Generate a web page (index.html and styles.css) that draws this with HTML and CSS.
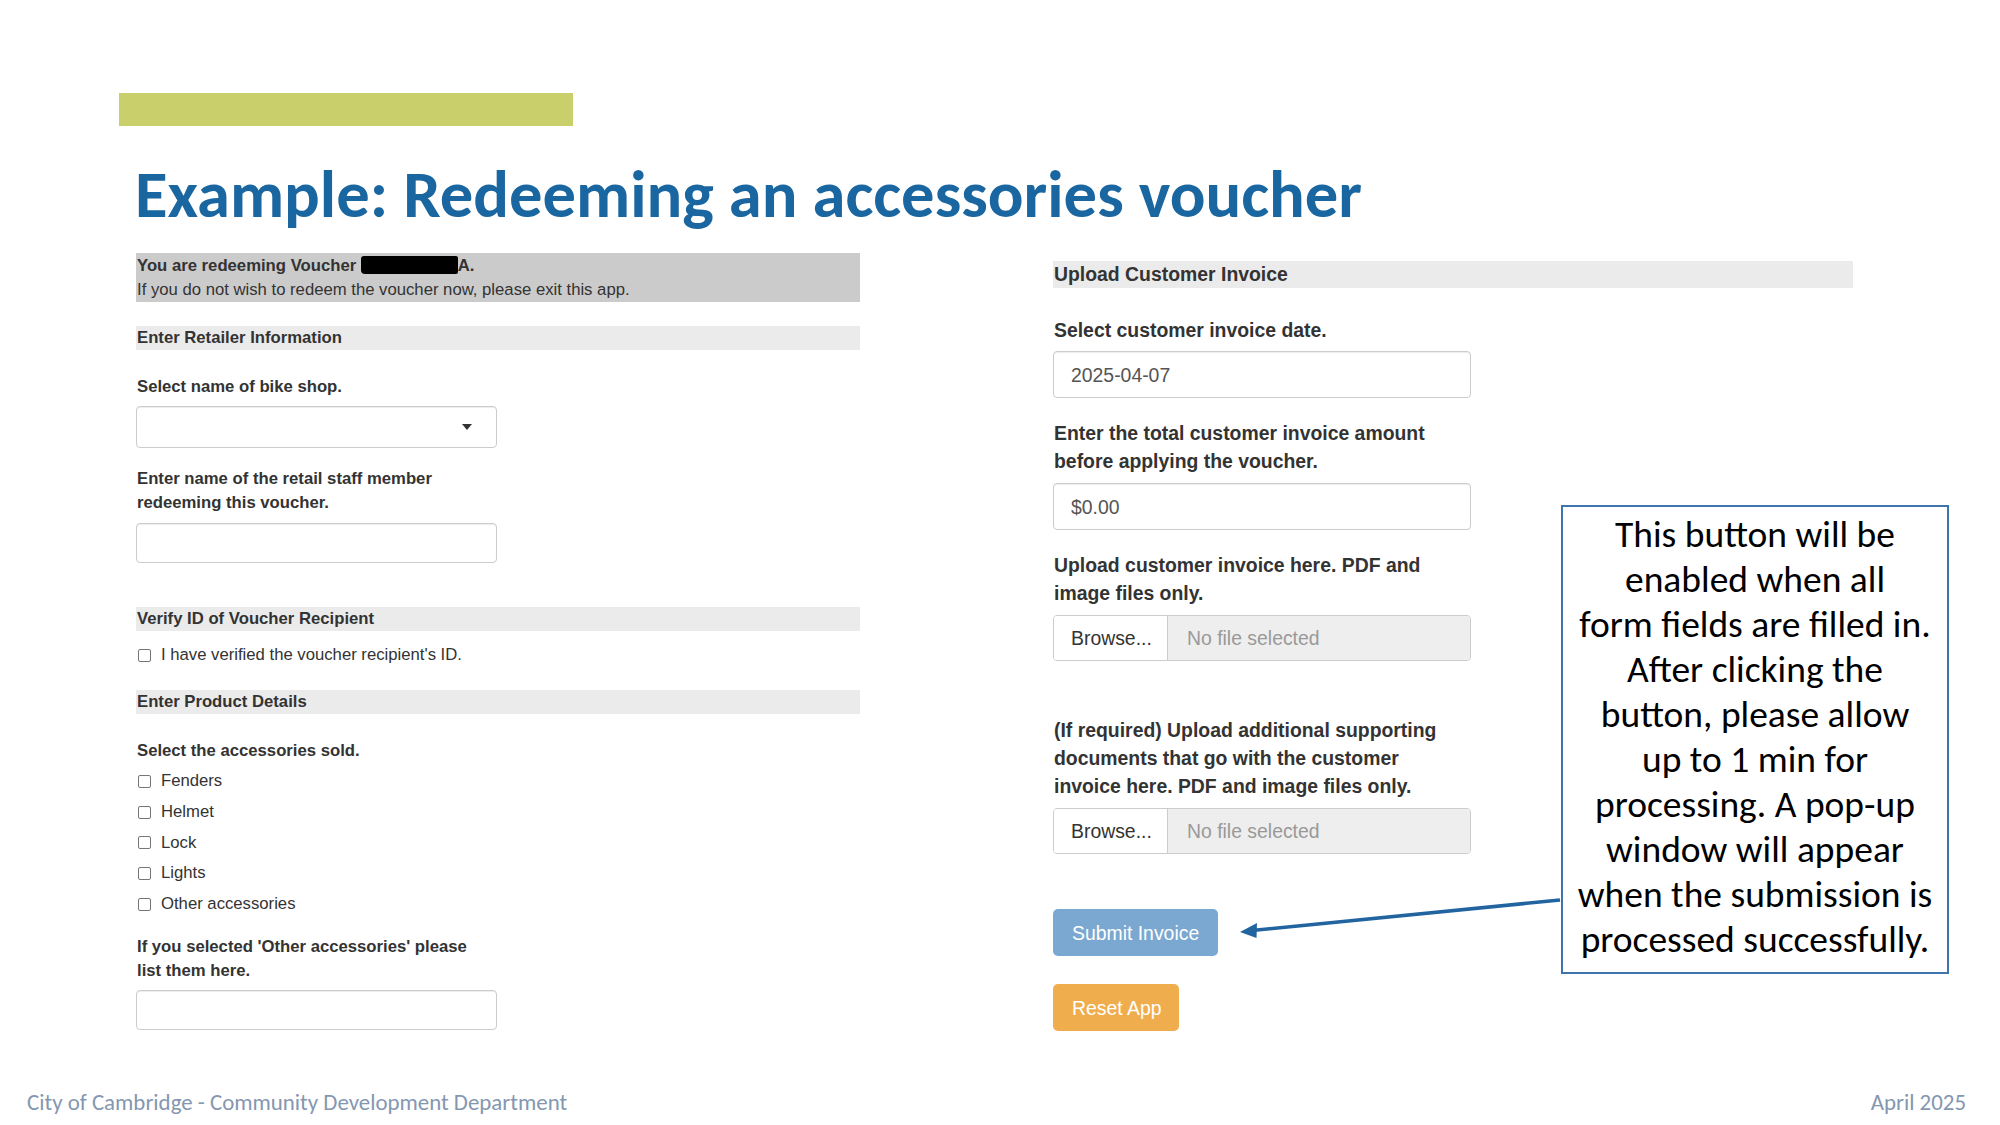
FILE: index.html
```html
<!DOCTYPE html>
<html lang="en">
<head>
<meta charset="utf-8">
<title>Example: Redeeming an accessories voucher</title>
<link rel="stylesheet" href="styles.css">
</head>
<body>
<div class="slide">
  <div class="accent"></div>
  <h1 class="title">Example: Redeeming an accessories voucher</h1>

  <div class="content">
    <div class="col-left">
      <div class="notice">
        <div class="notice-strong">You are redeeming Voucher <span class="redact"></span>A.</div>
        <div>If you do not wish to redeem the voucher now, please exit this app.</div>
      </div>

      <div class="section section-first">Enter Retailer Information</div>
      <div class="label label-after-section">Select name of bike shop.</div>
      <div class="select"><span class="caret"></span></div>
      <div class="label label-after-field">Enter name of the retail staff member<br>redeeming this voucher.</div>
      <div class="input"></div>

      <div class="section section-verify">Verify ID of Voucher Recipient</div>
      <div class="check-row check-single"><span class="box"></span>I have verified the voucher recipient's ID.</div>

      <div class="section section-product">Enter Product Details</div>
      <div class="label label-list">Select the accessories sold.</div>
      <div class="check-list">
        <div class="check-row"><span class="box"></span>Fenders</div>
        <div class="check-row"><span class="box"></span>Helmet</div>
        <div class="check-row"><span class="box"></span>Lock</div>
        <div class="check-row"><span class="box"></span>Lights</div>
        <div class="check-row"><span class="box"></span>Other accessories</div>
      </div>
      <div class="label label-other">If you selected 'Other accessories' please<br>list them here.</div>
      <div class="input"></div>
    </div>

    <div class="col-right">
      <div class="r-section">Upload Customer Invoice</div>
      <div class="r-label r-label-first">Select customer invoice date.</div>
      <div class="r-input">2025-04-07</div>
      <div class="r-label r-label-next">Enter the total customer invoice amount<br>before applying the voucher.</div>
      <div class="r-input">$0.00</div>
      <div class="r-label r-label-next">Upload customer invoice here. PDF and<br>image files only.</div>
      <div class="file"><span class="browse">Browse...</span><span class="file-name">No file selected</span></div>
      <div class="r-label r-label-far">(If required) Upload additional supporting<br>documents that go with the customer<br>invoice here. PDF and image files only.</div>
      <div class="file"><span class="browse">Browse...</span><span class="file-name">No file selected</span></div>
      <div class="btn btn-submit">Submit Invoice</div>
      <div class="btn btn-reset">Reset App</div>
    </div>
  </div>

  <div class="footer">
    <span>City of Cambridge - Community Development Department</span>
    <span>April 2025</span>
  </div>

  <div class="callout">This button will be<br>enabled when all<br>form fields are filled in.<br>After clicking the<br>button, please allow<br>up to 1 min for<br>processing. A pop-up<br>window will appear<br>when the submission is<br>processed successfully.</div>

  <svg class="arrow" width="340" height="60" viewBox="0 0 340 60" xmlns="http://www.w3.org/2000/svg">
    <line x1="330" y1="10" x2="22" y2="40.5" stroke="#2164a0" stroke-width="3.5"/>
    <polygon points="10,42 27,33 26.5,48" fill="#2164a0"/>
  </svg>
</div>
</body>
</html>
```

FILE: styles.css
```css
* { box-sizing: border-box; }
html, body { margin: 0; padding: 0; background: #fff; }

.slide {
  width: 2000px;
  height: 1125px;
  position: relative;
  overflow: hidden;
  padding-top: 93px;
  display: flex;
  flex-direction: column;
  background: #fff;
}

.accent {
  width: 454px;
  height: 33px;
  margin-left: 119px;
  background: #c9d06b;
}

.title {
  margin: 31px 0 0 135px;
  font-family: "Carlito", "Lato", sans-serif;
  font-weight: 700;
  font-size: 66.6px;
  line-height: 76px;
  color: #1a66a0;
  white-space: nowrap;
}

.content {
  display: flex;
  align-items: flex-start;
  margin-top: 20px;
}

/* ---------- left column ---------- */
.col-left {
  width: 724px;
  margin-left: 136px;
  font-family: "Liberation Sans", Arial, sans-serif;
  font-size: 16.7px;
  line-height: 24px;
  color: #333;
}

.notice {
  background: #cbcbcb;
  height: 49px;
  padding-left: 1px;
  padding-top: 1px;
}
.notice-strong { font-weight: 700; }
.redact {
  display: inline-block;
  width: 97px;
  height: 18px;
  background: #000;
  border-radius: 3px 2px 2px 4px;
  vertical-align: -3px;
}

.section {
  background: #ebebeb;
  height: 24px;
  font-weight: 700;
  padding-left: 1px;
}
.section-first { margin-top: 24px; }
.section-verify { margin-top: 44px; }
.section-product { margin-top: 23px; }

.label { font-weight: 700; padding-left: 1px; }
.label-after-section { margin-top: 25px; margin-bottom: 7px; }
.label-after-field { margin-top: 19px; margin-bottom: 8px; }
.label-list { margin-top: 25px; margin-bottom: 3px; }
.label-other { margin-top: 16px; margin-bottom: 7px; }

.select, .input {
  width: 361px;
  border: 1px solid #ccc;
  border-radius: 4px;
  box-shadow: inset 0 1px 1px rgba(0,0,0,.075);
  background: #fff;
}
.select {
  height: 42px;
  display: flex;
  align-items: center;
  justify-content: flex-end;
  padding-right: 24px;
}
.caret {
  width: 0;
  height: 0;
  border-left: 5px solid transparent;
  border-right: 5px solid transparent;
  border-top: 6px solid #333;
}
.input { height: 40px; }

.check-row {
  display: flex;
  align-items: center;
  height: 30.7px;
  padding-left: 2px;
}
.check-single { height: 24px; margin-top: 12px; }
.box {
  width: 13px;
  height: 13px;
  border: 1px solid #767676;
  border-radius: 2px;
  background: #fff;
  margin-right: 10px;
  flex: none;
}

/* ---------- right column ---------- */
.col-right {
  width: 800px;
  margin-left: 193px;
  padding-top: 8px;
  font-family: "Liberation Sans", Arial, sans-serif;
  font-size: 19.4px;
  line-height: 28px;
  color: #333;
}

.r-section {
  background: #ebebeb;
  height: 27px;
  line-height: 27px;
  font-weight: 700;
  padding-left: 1px;
}
.r-label { font-weight: 700; padding-left: 1px; }
.r-label-first { margin-top: 28px; margin-bottom: 7px; }
.r-label-next { margin-top: 21px; margin-bottom: 8px; }
.r-label-far { margin-top: 55px; margin-bottom: 8px; }

.r-input {
  width: 418px;
  height: 47px;
  border: 1px solid #ccc;
  border-radius: 4px;
  box-shadow: inset 0 1px 1px rgba(0,0,0,.075);
  display: flex;
  align-items: center;
  padding-left: 17px;
  color: #555;
}

.file {
  width: 418px;
  height: 46px;
  border: 1px solid #ccc;
  border-radius: 4px;
  display: flex;
  overflow: hidden;
}
.browse {
  width: 114px;
  display: flex;
  align-items: center;
  padding-left: 17px;
  border-right: 1px solid #ccc;
  background: #fff;
  color: #333;
}
.file-name {
  flex: 1;
  display: flex;
  align-items: center;
  padding-left: 19px;
  background: #eee;
  color: #999;
}

.btn {
  display: flex;
  align-items: center;
  width: max-content;
  height: 47px;
  padding: 0 19px;
  border-radius: 5px;
  color: #fff;
}
.btn-submit { background: #7aa8d0; margin-top: 55px; }
.btn-reset { background: #f0ad4e; margin-top: 28px; padding: 0 18px 0 19px; }

/* ---------- footer ---------- */
.footer {
  margin-top: auto;
  display: flex;
  justify-content: space-between;
  padding: 0 34px 8px 27px;
  font-family: "Carlito", "Lato", sans-serif;
  font-size: 22.9px;
  line-height: 30px;
  color: #8497b0;
}

/* ---------- annotation ---------- */
.callout {
  position: absolute;
  left: 1561px;
  top: 505px;
  width: 388px;
  height: 469px;
  border: 2px solid #3f74ad;
  background: #fff;
  padding-top: 5px;
  text-align: center;
  font-family: "Carlito", "Lato", sans-serif;
  font-size: 37.5px;
  line-height: 45px;
  color: #000;
  white-space: nowrap;
}

.arrow {
  position: absolute;
  left: 1230px;
  top: 890px;
}
```
